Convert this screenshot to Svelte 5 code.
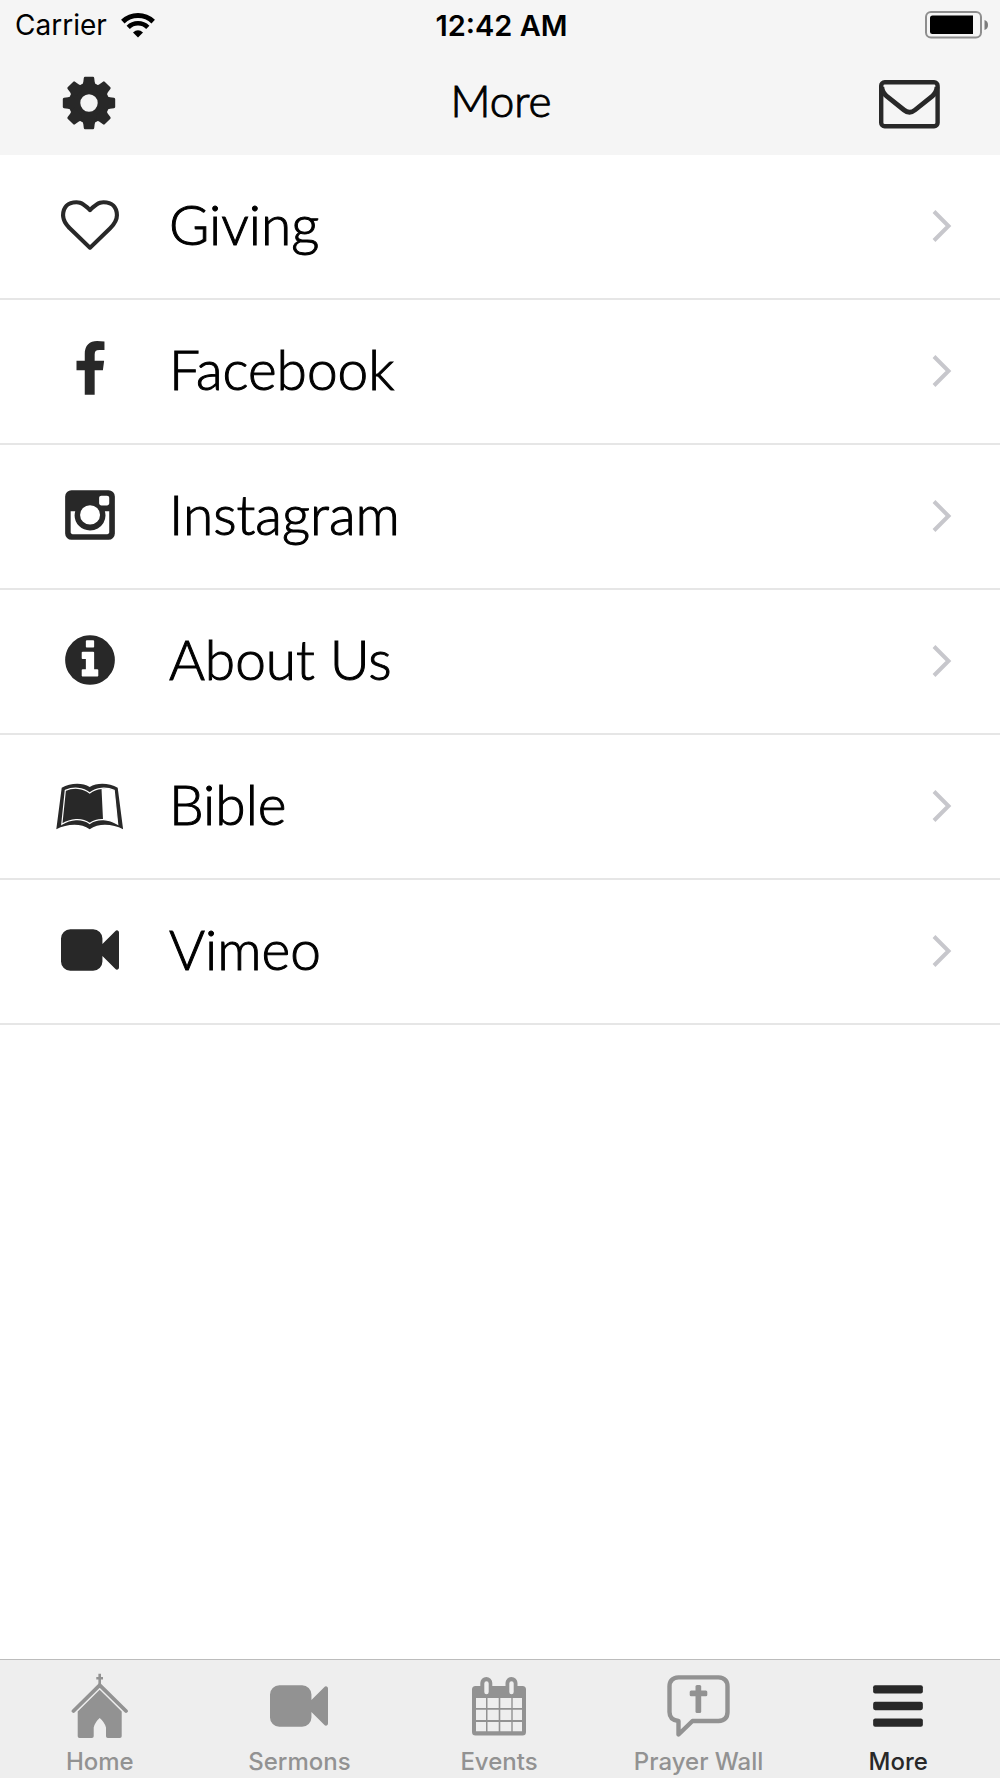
<script lang="ts">
	type Row = { label: string; icon: string };

	// icon outlines on a 1792 unit grid
	const paths: Record<string, string> = {
		heart: "M1664 596q0-81-21.5-143t-55-98.5-81.5-59.5-94-31-98-8-112 25.5-110.5 64-86.5 72-60 61.5q-18 22-49 22t-49-22q-24-28-60-61.5t-86.5-72-110.5-64-112-25.5-98 8-94 31-81.5 59.5-55 98.5-21.5 143q0 168 187 355l581 560 580-559q188-188 188-356zm128 0q0 221-229 450l-623 600q-18 18-44 18t-44-18l-624-602q-10-8-27.5-26t-55.5-65.5-68-97.5-53.5-121-23.5-138q0-220 127-344t351-124q62 0 126.5 21.5t120 58 95.5 68.5 76 68q36-36 76-68t95.5-68.5 120-58 126.5-21.5q224 0 351 124t127 344z",
		facebook: "M1343 12v264h-157q-86 0-116 36t-30 108v189h293l-39 296h-254v759h-306v-759h-255v-296h255v-218q0-186 104-288.5t277-102.5q147 0 228 12z",
		instagram: "M1490 1426v-648h-135q20 63 20 131 0 126-64 232.5t-174 168.5-240 62q-197 0-337-135.5t-140-327.5q0-68 20-131h-141v648q0 26 17.5 43.5t43.5 17.5h1069q25 0 43-17.5t18-43.5zm-284-533q0-124-90.5-211.5t-218.5-87.5q-127 0-217.5 87.5t-90.5 211.5 90.5 211.5 217.5 87.5q128 0 218.5-87.5t90.5-211.5zm284-360v-165q0-28-20-48.5t-49-20.5h-174q-29 0-49 20.5t-20 48.5v165q0 29 20 49t49 20h174q29 0 49-20t20-49zm174-208v1142q0 81-58 139t-139 58h-1142q-81 0-139-58t-58-139v-1142q0-81 58-139t139-58h1142q81 0 139 58t58 139z",
		info: "M1152 1376v-160q0-14-9-23t-23-9h-96v-512q0-14-9-23t-23-9h-320q-14 0-23 9t-9 23v160q0 14 9 23t23 9h96v320h-96q-14 0-23 9t-9 23v160q0 14 9 23t23 9h448q14 0 23-9t9-23zm-128-896v-160q0-14-9-23t-23-9h-192q-14 0-23 9t-9 23v160q0 14 9 23t23 9h192q14 0 23-9t9-23zm640 416q0 209-103 385.5t-279.5 279.5-385.5 103-385.5-103-279.5-279.5-103-385.5 103-385.5 279.5-279.5 385.5-103 385.5 103 279.5 279.5 103 385.5z",
		video: "M1792 352v1088q0 42-39 59-13 5-25 5-27 0-45-19l-403-403v166q0 119-84.5 203.5t-203.5 84.5h-704q-119 0-203.5-84.5t-84.5-203.5v-704q0-119 84.5-203.5t203.5-84.5h704q119 0 203.5 84.5t84.5 203.5v165l403-402q18-19 45-19 12 0 25 5 39 17 39 59z",
	};

	const rows: Row[] = [
		{ label: "Giving", icon: "heart" },
		{ label: "Facebook", icon: "facebook" },
		{ label: "Instagram", icon: "instagram" },
		{ label: "About Us", icon: "info" },
		{ label: "Bible", icon: "book" },
		{ label: "Vimeo", icon: "video" },
	];

	const tabs: Row[] = [
		{ label: "Home", icon: "church" },
		{ label: "Sermons", icon: "video" },
		{ label: "Events", icon: "calendar" },
		{ label: "Prayer Wall", icon: "prayer" },
		{ label: "More", icon: "bars" },
	];

	let active = $state("More");
</script>

{#snippet icon(name: string)}
	{#if name === "book"}
		<svg width="68" height="50" viewBox="0 -3 68 50" aria-hidden="true">
			<path fill="currentColor" d="M.3 46.200 5.700 4.700C14 0 26-1 33.700 4 41.500-1 53.500 0 61.700 4.700L67.100 46.200C57 41 43 39.500 33.700 46.200 24.500 39.500 10.500 41 .3 46.200z" />
			<path fill="none" stroke="#fff" stroke-width="1.200" d="M5.800 41.300 9.300 7.400C17 4 27 4.300 33.700 10 40.500 4.300 50.500 4 58.200 7.400L61.700 41.300C53 36 42 34.500 33.700 40.500 25.500 34.500 14.500 36 5.800 41.300z" />
			<path fill="#fff" d="M45.500 5.600Q52.500 5.200 58.200 7.400L61.700 41.300Q54 37 47 36.600z" />
		</svg>
	{:else if name === "church"}
		<svg width="58" height="66" viewBox="0 0 58 66" aria-hidden="true">
			<path fill="none" stroke="currentColor" stroke-width="2.600" d="M28.700 .8V12M25.300 5.300H32" />
			<path fill="none" stroke="currentColor" stroke-width="3.800" stroke-linecap="round" d="M2.500 38 28.700 12.200 55 38" />
			<path fill="currentColor" d="M6.700 38.500 28.700 16.700 50.700 38.500V63.200Q50.700 65 48.900 65H36.800Q35 65 35 63.200V54.500Q33.500 49 28.700 45 24 49 22.700 54.500V63.200Q22.700 65 20.900 65H8.500Q6.700 65 6.700 63.200z" />
		</svg>
	{:else if name === "calendar"}
		<svg width="54" height="59" viewBox="0 0 54 59" aria-hidden="true">
			<path fill="currentColor" fill-rule="evenodd" d="M3.500 9H8.300V6a6 6 0 0 1 12 0V9H33.500V6a6 6 0 0 1 12 0V9H50.500Q54 9 54 12.500V55Q54 58.500 50.500 58.500H3.500Q0 58.500 0 55V12.500Q0 9 3.500 9zM12.300 6.500V15a2.200 2.200 0 0 0 4.400 0V6.500a2.200 2.200 0 0 0-4.400 0zM37.300 6.500V15a2.200 2.200 0 0 0 4.400 0V6.500a2.200 2.200 0 0 0-4.400 0zM4 21V31H14V21zM15.500 21V31H26.700V21zM28.300 21V31H39.300V21zM40.700 21V31H50V21zM4 32.800V43H14V32.800zM15.500 32.800V43H26.700V32.800zM28.300 32.800V43H39.300V32.800zM40.700 32.800V43H50V32.800zM4 45V54.300H14V45zM15.500 45V54.300H26.700V45zM28.300 45V54.300H39.300V45zM40.700 45V54.300H50V45z" />
		</svg>
	{:else if name === "prayer"}
		<svg width="63" height="62" viewBox="0 0 63 62" aria-hidden="true">
			<path fill="none" stroke="currentColor" stroke-width="4.400" stroke-linejoin="round" d="M11.500 2.400H51.500Q60.500 3 60.500 11.500V37Q60.500 45.500 51.500 46H25.500L11.500 59.500V46Q2.500 45 2.500 37V11.500Q2.500 3 11.500 2.400z" />
			<rect x="28.500" y="10" width="5.700" height="28" rx="1.500" fill="currentColor" />
			<rect x="22.700" y="15.600" width="17.600" height="5.700" rx="1.500" fill="currentColor" />
		</svg>
	{:else if name === "bars"}
		<svg width="58" height="58" viewBox="0 0 1792 1792" fill="currentColor" aria-hidden="true">
			{#each [256, 768, 1280] as y}
				<rect x="128" {y} width="1536" height="256" rx="64" />
			{/each}
		</svg>
	{:else}
		<svg width="58" height="58" viewBox="0 0 1792 1792" aria-hidden="true">
			<path fill="currentColor" d={paths[name]} />
		</svg>
	{/if}
{/snippet}

<div class="app">
	<header>
		<div class="status">
			<span class="carrier">
				Carrier
				<svg width="34" height="25" viewBox="0 0 34 25" aria-hidden="true">
					<path fill="none" stroke="#000" stroke-width="5" d="M1.800 8.600A22 22 0 0 1 32.200 8.600" />
					<path fill="none" stroke="#000" stroke-width="4.600" d="M7.200 14.300A14 14 0 0 1 26.800 14.300" />
					<path fill="#000" d="M12 19.500Q17 15.200 22 19.500L17 24.500z" />
				</svg>
			</span>
			<time>12:42 AM</time>
			<svg class="battery" width="63" height="28" viewBox="0 0 63 28" aria-hidden="true">
				<rect x="1" y="1" width="55" height="25.500" rx="5" fill="none" stroke="#8e8e8e" stroke-width="2" />
				<path d="M7.500 4.500H48V23H7.500Q5 23 5 20.500V7Q5 4.500 7.500 4.500z" />
				<path fill="#7c7c7c" d="M59.500 9Q63 10 63 14T59.500 19z" />
			</svg>
		</div>
		<div class="nav">
			<button class="gear" aria-label="Settings">
				<svg width="54" height="54" viewBox="-27 -27 54 54" fill="currentColor" aria-hidden="true">
					<path fill-rule="evenodd" d="M0-20A20 20 0 1 1 0 20 20 20 0 1 1 0-20zM0-8.700A8.700 8.700 0 1 0 0 8.700 8.700 8.700 0 1 0 0-8.700z" />
					{#each [0, 45, 90, 135, 180, 225, 270, 315] as angle}
						<path transform="rotate({angle})" d="M-7.800-18Q-5.900-19-5.700-21L-5.200-25Q-5-26.200-4-26.200H4Q5-26.200 5.200-25L5.700-21Q5.900-19 7.800-18L4-14H-4z" />
					{/each}
				</svg>
			</button>
			<h1>More</h1>
			<button class="mail" aria-label="Messages">
				<svg width="61" height="49" viewBox="0 0 61 49" fill="none" stroke="currentColor" aria-hidden="true">
					<rect x="2.200" y="2.200" width="56.400" height="44" rx="3.500" stroke-width="4.400" />
					<path stroke-width="4.800" d="M2.800 7Q3.200 12.500 8 16.500L25 30Q30.500 34.500 36 30L53 16.500Q57.600 12.500 58 7" />
				</svg>
			</button>
		</div>
	</header>

	<main>
		<ul>
			{#each rows as row}
				<li>
					<a href="#{row.icon}">
						<span class="icon">{@render icon(row.icon)}</span>
						<span class="label">{row.label}</span>
						<svg width="20" height="36" viewBox="0 -2 20 36" aria-hidden="true">
							<path fill="none" stroke="#c7c7cc" stroke-width="4" d="M2 2.500 16.500 17 2 31.500" />
						</svg>
					</a>
				</li>
			{/each}
		</ul>
	</main>

	<nav class="tabs">
		{#each tabs as tab}
			<button class:active={active === tab.label} onclick={() => (active = tab.label)}>
				<span class="icon">{@render icon(tab.icon)}</span>
				{tab.label}
			</button>
		{/each}
	</nav>
</div>

<style>
	:global(body) {
		margin: 0;
		background-color: #fff;
	}
	.app {
		display: flex;
		flex-direction: column;
		min-height: 100vh;
		font-family: Inter, "Liberation Sans", sans-serif;
		color: #000;
	}
	svg {
		display: block;
		flex: none;
	}
	button {
		border: 0;
		padding: 0;
		background: none;
		font: inherit;
		color: #282828;
		cursor: pointer;
	}
	header {
		background-color: #f5f5f5;
	}
	.status,
	.nav {
		display: grid;
		grid-template-columns: 1fr auto 1fr;
		align-items: center;
	}
	.status {
		height: 50px;
		padding: 0 12px 0 15px;
		font-size: 28px;

		time {
			font-size: 29px;
			font-weight: 600;
		}
	}
	.carrier {
		display: flex;
		align-items: center;
		gap: 14px;
	}
	.battery {
		justify-self: end;
	}
	.nav {
		height: 105px;
		padding: 0 60px 0 62px;
	}
	.gear {
		justify-self: start;
	}
	.mail {
		justify-self: end;
		padding-top: 4px;
	}
	h1 {
		margin: 0;
		padding-bottom: 6px;
		font: 300 44px Lato, sans-serif;
		-webkit-text-stroke: 1px #000;
	}
	main {
		flex: 1;
	}
	ul {
		list-style: none;
		margin: 0;
		padding: 0;
	}
	li a {
		display: flex;
		align-items: center;
		height: 139px;
		padding: 0 48px 4px 56px;
		border-bottom: 2px solid #e6e6e6;
		color: #000;
		text-decoration: none;
	}
	li .icon {
		display: flex;
		justify-content: center;
		width: 68px;
		color: #282828;
	}
	.label {
		flex: 1;
		margin-left: 45px;
		padding-bottom: 2px;
		font: 300 55px Lato, sans-serif;
		-webkit-text-stroke: 1px #000;
	}
	.tabs {
		display: grid;
		grid-template-columns: repeat(5, 1fr);
		padding-right: 2px;
		border-top: 1px solid #bcbcbc;
		background-color: #eee;

		button {
			display: flex;
			flex-direction: column;
			align-items: center;
			gap: 9px;
			padding: 13px 0 2px;
			font-size: 24px;
			font-weight: 500;
			line-height: 28px;
			color: #929292;
		}
		button.active {
			color: #282828;
		}
		.icon {
			display: flex;
			align-items: center;
			height: 66px;
		}
	}
</style>
